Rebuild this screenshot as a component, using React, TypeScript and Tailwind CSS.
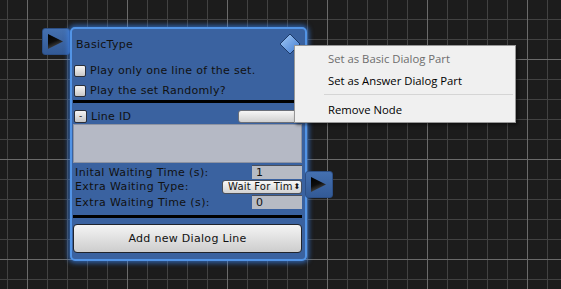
import React from 'react'

const panelFont = { fontFamily: '"DejaVu Sans", Verdana, sans-serif' }

const Checkbox = ({ label }: { label: string }) => (
  <div className="flex items-center h-[13px]">
    <div className="ml-[1px] w-[12px] h-[12px] rounded-[2px] border border-[#2a2f3a] bg-[linear-gradient(to_bottom,#f4f4f4,#c8c8c8)]" />
    <span className="ml-[4px] text-[11px] tracking-[0.3px] text-[#111] leading-none">{label}</span>
  </div>
)

const Arrow = () => (
  <svg width="15" height="15" viewBox="0 0 16 16">
    <defs>
      <linearGradient id="tri" x1="0" y1="0" x2="0.4" y2="1">
        <stop offset="0" stopColor="#000" />
        <stop offset="0.55" stopColor="#0d0d0d" />
        <stop offset="1" stopColor="#505050" />
      </linearGradient>
    </defs>
    <path d="M0 0 L16 8 L0 16 Z" fill="url(#tri)" />
  </svg>
)

const NumField = ({ value }: { value: string }) => (
  <div className="w-[50px] h-[14px] bg-[#b7bbc4] border-t border-[#4a4f5a] flex items-center pl-[4px] text-[11px] text-[#111] leading-none">
    {value}
  </div>
)

export default function App() {
  return (
    <div
      className="relative w-[561px] h-[289px] overflow-hidden bg-[#1c1c1c] bg-[linear-gradient(to_right,#6a6a6a_1px,transparent_1px),linear-gradient(to_bottom,#6a6a6a_1px,transparent_1px),linear-gradient(to_right,#424242_1px,transparent_1px),linear-gradient(to_bottom,#424242_1px,transparent_1px)] bg-[size:100px_100px,100px_100px,20px_20px,20px_20px] bg-[position:27px_0,0_59px,7px_0,0_19px]"
      style={panelFont}
    >
      {/* input tab */}
      <div className="absolute left-[42px] top-[28px] w-[28px] h-[27px] rounded-[3px] bg-[linear-gradient(to_bottom,#4470b0,#335a96)] border border-[#2c4f86] flex items-center justify-center pr-[1px]">
        <Arrow />
      </div>

      {/* node */}
      <div className="absolute left-[70px] top-[27px] w-[237px] h-[234px] rounded-[5px] border-2 border-[#5294e6] bg-[#3a62a0] shadow-[0_0_5px_2px_rgba(60,140,255,0.6)] flex flex-col pl-[1px] pr-[3px]">
        <div className="h-[29px] flex items-center pl-[3px] pt-[1px]">
          <span className="text-[11px] tracking-[0.3px] text-[#111] leading-none">BasicType</span>
          <svg className="ml-auto mr-[1px]" width="22" height="22" viewBox="0 0 22 22">
            <defs>
              <linearGradient id="dia" x1="0" y1="0" x2="1" y2="1">
                <stop offset="0" stopColor="#a4cbf6" />
                <stop offset="1" stopColor="#3f7ad2" />
              </linearGradient>
            </defs>
            <path d="M11 1 L21 11 L11 21 L1 11 Z" fill="url(#dia)" stroke="#1d3a68" strokeWidth="1" />
          </svg>
        </div>
        <div className="mt-[6px] flex flex-col gap-[7px]">
          <Checkbox label="Play only one line of the set." />
          <Checkbox label="Play the set Randomly?" />
        </div>
        <div className="mt-[3px] h-[3px] bg-black" />
        <div className="mt-[7px] h-[13px] flex items-center">
          <div className="ml-[1px] w-[13px] h-[13px] rounded-[2px] border border-[#2a2f3a] bg-[linear-gradient(to_bottom,#f4f4f4,#c6c6c6)] flex items-center justify-center text-[9px] text-[#111] leading-none">
            -
          </div>
          <span className="ml-[4px] text-[11px] tracking-[0.3px] text-[#111] leading-none">Line ID</span>
          <div className="ml-auto w-[64px] h-[13px] rounded-[3px] border border-[#6b6f78] bg-[linear-gradient(to_bottom,#f6f6f6,#d0d0d0)]" />
        </div>
        <div className="mt-[1px] h-[39px] bg-[#b5b9c5] border border-[#8d93a2]" />
        <div className="mt-[2px] h-[14px] flex items-center justify-between">
          <span className="pl-[2px] text-[11px] tracking-[0.4px] text-[#111] leading-none">Inital Waiting Time (s):</span>
          <NumField value="1" />
        </div>
        <div className="h-[15px] flex items-center justify-between">
          <span className="pl-[2px] text-[11px] tracking-[0.4px] text-[#111] leading-none">Extra Waiting Type:</span>
          <div className="w-[80px] h-[14px] rounded-[3px] border border-[#4a4f5a] bg-[linear-gradient(to_bottom,#f8f8f8,#d2d2d2)] flex items-center pl-[5px] text-[10px] tracking-[0.2px] text-[#111] leading-none whitespace-nowrap overflow-hidden">
            Wait For Tim<span className="text-[8px] ml-[1px]">⬍</span>
          </div>
        </div>
        <div className="mt-[1px] h-[14px] flex items-center justify-between">
          <span className="pl-[2px] text-[11px] tracking-[0.4px] text-[#111] leading-none">Extra Waiting Time (s):</span>
          <NumField value="0" />
        </div>
        <div className="mt-[6px] h-[3px] bg-black" />
        <div className="mt-[6px] h-[29px] rounded-[4px] border border-[#20242c] bg-[linear-gradient(to_bottom,#f4f4f4,#cdcdcd)] flex items-center justify-center text-[11px] tracking-[0.3px] text-[#111] leading-none">
          Add new Dialog Line
        </div>
      </div>

      {/* output tab */}
      <div className="absolute left-[305px] top-[171px] w-[28px] h-[27px] rounded-[3px] bg-[linear-gradient(to_bottom,#4470b0,#335a96)] border border-[#2c4f86] flex items-center justify-center pr-[1px]">
        <Arrow />
      </div>

      {/* context menu */}
      <div
        className="absolute left-[294px] top-[45px] w-[222px] h-[78px] bg-[#f0f0f0] border border-[#979797] shadow-[2px_2px_3px_rgba(0,0,0,0.45)] flex flex-col py-[2px] text-[11.3px] leading-none"
        style={{ fontFamily: '"Open Sans", "Noto Sans", sans-serif' }}
      >
        <div className="h-[22px] flex items-center pl-[33px] text-[#6d6d6d]">Set as Basic Dialog Part</div>
        <div className="h-[22px] flex items-center pl-[33px] text-black">Set as Answer Dialog Part</div>
        <div className="mt-[3px] mb-[3px] ml-[29px] mr-[2px] h-px bg-[#d5d5d5]" />
        <div className="h-[22px] flex items-center pl-[33px] text-black">Remove Node</div>
      </div>
    </div>
  )
}
